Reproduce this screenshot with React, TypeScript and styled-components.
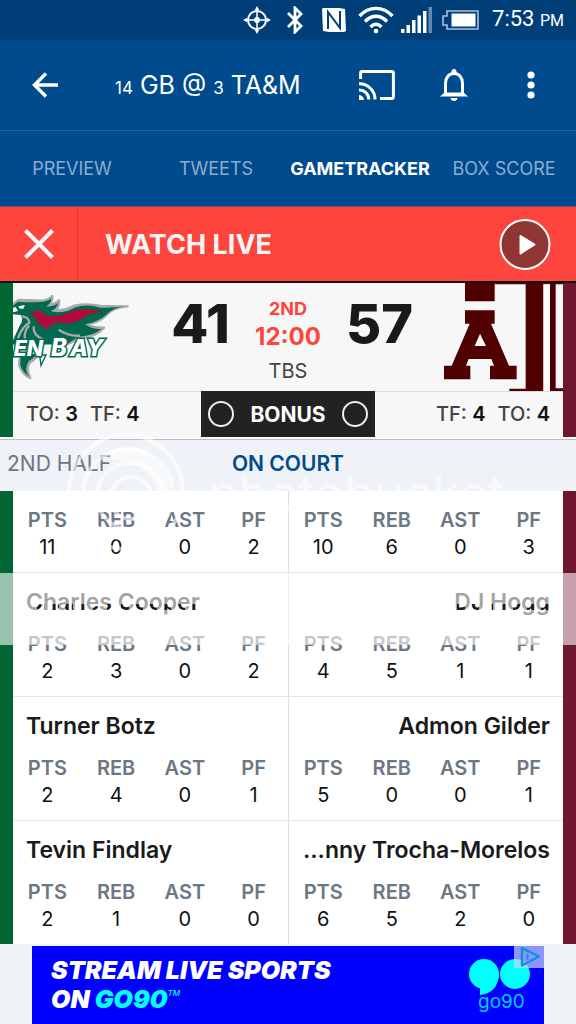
import React from "react";
import styled, { createGlobalStyle } from "styled-components";

const GlobalStyle = createGlobalStyle`
  *, *::before, *::after { box-sizing: border-box; }
  body { margin: 0; background: #eff3f7; }
  button { border: 0; padding: 0; background: none; font: inherit; color: inherit; cursor: pointer; }
  svg { display: block; flex: none; }
`;

const sans = `Inter, "Open Sans", "Liberation Sans", sans-serif`;
const green = "#006633";
const maroon = "#6f182d";

const Page = styled.div`
  font-family: ${sans};
  color: #1a1a1a;
  overflow-x: hidden;
`;

const StatusBar = styled.div`
  display: flex;
  align-items: center;
  justify-content: flex-end;
  height: 40px;
  padding-right: 12px;
  background: #003e78;
  color: #fff;
`;

const StatusIcon = styled.svg<{ $gap: number }>`
  margin-right: ${(p) => p.$gap}px;
`;

const StatusTime = styled.time`
  font: 400 22px/44px Roboto, sans-serif;
  small { font-size: 16px; }
`;

const AppBar = styled.header`
  display: flex;
  align-items: center;
  height: 90px;
  padding: 0 40px 0 32px;
  background: #004b8d;
  color: #fff;
`;

const Title = styled.h1`
  flex: 1;
  margin: 0 0 0 56px;
  padding-top: 3px;
  font-size: 25px;
  font-weight: 400;
  line-height: 32px;
  white-space: nowrap;
  small { font-size: 17px; }
`;

const BarButton = styled.button<{ $gap?: number }>`
  margin-left: ${(p) => p.$gap ?? 0}px;
`;

const Tabs = styled.nav`
  display: grid;
  grid-template-columns: repeat(4, 1fr);
  height: 77px;
  border-top: 1px solid #1f62a0;
  border-bottom: 1px solid #7a4a72;
  background: #004b8d;
`;

const Tab = styled.a<{ $active?: boolean }>`
  display: flex;
  align-items: center;
  justify-content: center;
  font-size: 18px;
  font-weight: ${(p) => (p.$active ? 700 : 400)};
  color: ${(p) => (p.$active ? "#fff" : "#8cadd0")};
  text-decoration: none;
  white-space: nowrap;
`;

const LiveBanner = styled.div`
  display: flex;
  align-items: stretch;
  height: 76px;
  border-bottom: 2px solid #111;
  background: #fd453d;
  color: #fff;
`;

const DismissButton = styled.button`
  display: flex;
  align-items: center;
  justify-content: center;
  width: 78px;
  border-right: 1px solid #d93c36;
`;

const LiveLabel = styled.div`
  flex: 1;
  padding-left: 27px;
  font-size: 27px;
  font-weight: 700;
  line-height: 76px;
  color: #f5f5f5;
`;

const PlayButton = styled.button`
  margin-right: 25px;
`;

const Railed = styled.section`
  border-left: 13px solid ${green};
  border-right: 13px solid ${maroon};
`;

const Scoreboard = styled(Railed)`
  background: #f7f7f7;
`;

const ScoreRow = styled.div`
  display: grid;
  grid-template-columns: 130px 1fr 68px 1fr 130px;
  height: 108px;
`;

const Score = styled.div`
  padding-left: 4px;
  font-size: 54px;
  font-weight: 800;
  line-height: 82px;
  text-align: center;
`;

const Clock = styled.div`
  display: flex;
  flex-direction: column;
  align-items: center;
  padding-top: 14px;
  white-space: nowrap;
`;

const Period = styled.div`
  font-size: 18px;
  font-weight: 700;
  line-height: 24px;
  color: #fd453d;
`;

const TimeLeft = styled(Period)`
  font-size: 24px;
  line-height: 32px;
`;

const Network = styled.div`
  margin-top: 4px;
  font-size: 20px;
  line-height: 28px;
  color: #444;
`;

const FoulRow = styled.div`
  display: grid;
  grid-template-columns: 1fr 174px 1fr;
  height: 46px;
`;

const Fouls = styled.div<{ $right?: boolean }>`
  display: flex;
  gap: 12px;
  justify-content: ${(p) => (p.$right ? "flex-end" : "flex-start")};
  padding: 0 13px;
  border-top: 1px solid #dcdcdc;
  font-size: 20px;
  font-weight: 500;
  line-height: 44px;
  color: #444;
  white-space: nowrap;
  b { font-weight: 600; color: #111; }
`;

const Bonus = styled.div`
  display: flex;
  align-items: center;
  justify-content: space-between;
  padding: 0 7px;
  background: #222;
  color: #fff;
  font-size: 21px;
  font-weight: 700;
`;

const BonusLight = styled.span`
  width: 26px;
  height: 26px;
  border: 2px solid #eee;
  border-radius: 50%;
`;

const Court = styled.div`
  position: relative;
`;

const CourtHeader = styled.div`
  display: grid;
  grid-template-columns: 1fr auto 1fr;
  height: 54px;
  padding: 0 7px;
  border-top: 2px solid #fafafa;
  background: #eff3f7;
  box-shadow: inset 0 1px 0 #bdbdbd;
  font-size: 21px;
  line-height: 50px;
  color: #6c7784;
  white-space: nowrap;
`;

const CourtTitle = styled.h2`
  margin: 0;
  font-size: 21px;
  font-weight: 600;
  color: #004b8d;
`;

const Players = styled(Railed)`
  background: #fff;
`;

const PlayerRow = styled.div`
  display: grid;
  grid-template-columns: 1fr 1fr;
  & + & { border-top: 1px solid #e6e6e6; }
`;

const Player = styled.article<{ $away?: boolean }>`
  min-width: 0;
  padding: 17px 0 10px;
  border-left: ${(p) => (p.$away ? "0" : "1px solid #dedede")};
`;

const PlayerName = styled.h3<{ $right: boolean }>`
  margin: 0 13px 18px;
  font-size: 23px;
  font-weight: 600;
  line-height: 24px;
  text-align: ${(p) => (p.$right ? "right" : "left")};
  white-space: nowrap;
`;

const StatTable = styled.table`
  width: 100%;
  table-layout: fixed;
  border-collapse: collapse;
  font-size: 20px;
  text-align: center;
  th { height: 24px; padding: 0; font-weight: 600; line-height: 24px; color: #6c7784; }
  td { height: 30px; padding: 0; line-height: 30px; color: #111; }
`;

const Watermark = styled.svg`
  position: absolute;
  top: -6px;
  left: 66px;
  pointer-events: none;
`;

const WatermarkBand = styled.svg`
  position: absolute;
  top: 136px;
  left: 0;
  width: 100%;
  height: 72px;
  pointer-events: none;
`;

const AdSlot = styled.aside`
  padding: 2px 32px 0;
  background: #eff3f7;
`;

const Ad = styled.a`
  display: flex;
  justify-content: space-between;
  height: 78px;
  padding: 10px 13px 0 19px;
  background: #0000fe;
  color: #fff;
  text-decoration: none;
`;

const AdFrame = styled.div`
  position: relative;
`;

const AdText = styled.div`
  font-size: 25px;
  font-weight: 900;
  font-style: italic;
  line-height: 29px;
  white-space: nowrap;
  em { color: #0ff; }
  sup { font-size: 8px; font-weight: 500; line-height: 8px; vertical-align: 12px; color: #0ff; }
`;

const AdChoices = styled.button`
  position: absolute;
  top: 0;
  right: 0;
`;

type Line = { name?: string; stats: number[] };
const rows: [Line, Line][] = [
  [{ stats: [11, 0, 0, 2] }, { stats: [10, 6, 0, 3] }],
  [{ name: "Charles Cooper", stats: [2, 3, 0, 2] }, { name: "DJ Hogg", stats: [4, 5, 1, 1] }],
  [{ name: "Turner Botz", stats: [2, 4, 0, 1] }, { name: "Admon Gilder", stats: [5, 0, 0, 1] }],
  [{ name: "Tevin Findlay", stats: [2, 1, 0, 0] }, { name: "...nny Trocha-Morelos", stats: [6, 5, 2, 0] }],
];

function PlayerCard({ line, away }: { line: Line; away: boolean }) {
  return (
    <Player $away={away}>
      {line.name && <PlayerName $right={!away}>{line.name}</PlayerName>}
      <StatTable>
        <thead>
          <tr>{["PTS", "REB", "AST", "PF"].map((s) => <th key={s} scope="col">{s}</th>)}</tr>
        </thead>
        <tbody>
          <tr>{line.stats.map((v, i) => <td key={i}>{v}</td>)}</tr>
        </tbody>
      </StatTable>
    </Player>
  );
}

function StatusIcons() {
  return (
    <>
      <StatusIcon $gap={15} width="28" height="28" viewBox="0 0 28 28" fill="none" stroke="#fff" strokeWidth="1.5">
        <circle cx="14" cy="14" r="9" strokeWidth="2" />
        <path d="M14 3v22M3 14h22" />
        <circle cx="14" cy="14" r="3" fill="#fff" stroke="none" />
        <path d="M14 0l2.200 4h-4.400zM14 28l2.200-4h-4.400zM0 14l4-2.200v4.400zM28 14l-4-2.200v4.400z" fill="#fff" stroke="none" />
      </StatusIcon>
      <StatusIcon $gap={18} width="18" height="28" viewBox="0 0 18 28" fill="none" stroke="#fff" strokeWidth="2.800">
        <path d="M2 7l13 13-6 6V2l6 6L2 21" />
      </StatusIcon>
      <StatusIcon $gap={12} width="24" height="24" viewBox="0 0 24 24">
        <path d="M1 0H17L23 1L24 23L22 24H7L1 23L0 1Z" fill="#fff" />
        <path d="M6 21V4L18 20V3" fill="none" stroke="#003e78" strokeWidth="2" />
      </StatusIcon>
      <StatusIcon $gap={7} width="36" height="28" viewBox="0 0 36 28" fill="none" stroke="#fff" strokeWidth="3.400">
        <path d="M1.500 10C11-.2 25-.2 34.500 10M7 15.500c6.500-7 15.500-7 22 0M12.500 21c3.500-3.400 7.500-3.400 11 0" />
        <circle cx="18" cy="25" r="2.300" fill="#fff" stroke="none" />
      </StatusIcon>
      <StatusIcon $gap={10} width="31" height="26" viewBox="0 0 31 26" fill="#fff">
        <path d="M0 22h3.500v4H0zM5.500 18H9v8H5.500zM11 13h3.500v13H11zM16.500 8.500H20V26h-3.500zM22 4h3.500v22H22z" />
        <path d="M27.500 0H31v26h-3.500z" opacity=".4" />
      </StatusIcon>
      <StatusIcon $gap={13} width="37" height="20" viewBox="0 0 37 20">
        <path d="M5 1H36V19H5V15H1V6H5Z" fill="none" stroke="#a9c1da" strokeWidth="1.600" />
        <path d="M9.500 3.500H33.500V16.500H9.500Z" fill="#fff" />
      </StatusIcon>
    </>
  );
}

/* Phoenix head and wings with the wordmark across them. */
function PhoenixLogo() {
  return (
    <svg width="130" height="108" viewBox="39 24 390 324" role="img" aria-label="Green Bay Phoenix">
      <g stroke="#a7a9ac" strokeWidth="7" strokeLinejoin="round" fill="#a7a9ac">
        <path d="M39 88L55 75Q90 76 128 77Q148 74 157 63Q157 84 145 91Q166 88 177 76Q180 98 162 107Q192 108 224 92Q260 84 302 93Q350 95 383 94Q342 96 322 118Q298 145 262 146Q280 160 312 158Q290 184 240 190L205 206H39Z" />
        <path d="M66 240H112Q104 256 90 262Q76 280 91 309Q65 296 58 272Q55 256 66 240Z" />
      </g>
      <path d="M39 92L54 80Q92 83 128 80Q147 79 154 70Q153 88 137 95Q164 94 174 83Q173 100 152 108Q190 119 226 97Q260 86 302 98Q345 99 372 94Q338 99 318 120Q294 141 255 148Q276 164 304 162Q284 181 236 185L200 208H39Z" fill="#00694e" />
      <path d="M64 238H110Q101 251 86 259Q71 282 87 304Q66 290 61 270Q60 252 64 238Z" fill="#00694e" />
      <path d="M88 113Q108 112 122 105Q124 118 150 124Q189 125 224 105Q263 98 314 111Q279 112 261 121Q238 142 202 146Q172 139 156 149L137 166Q134 151 116 148Q115 132 88 113Z" fill="#b3093c" />
      <path d="M39 98L47 96L54 108L39 112ZM55 94L75 90L69 102L58 100Z" fill="#fff" />
      <path d="M39 118L62 120Q72 136 60 150L39 196Z" fill="#f7f7f7" />
      <path d="M62 124Q86 124 88 143Q66 155 54 190M88 152Q72 165 74 195M101 154Q98 180 130 194M176 164Q206 184 240 182" fill="none" stroke="#a7a9ac" strokeWidth="7" />
      <path d="M119 240L138 240L123 271Z" fill="#fff" stroke="#00694e" strokeWidth="4" />
      <g fontFamily={sans} fontWeight="800" fontStyle="italic" fill="#fff" stroke="#00694e" strokeWidth="9" paintOrder="stroke">
        <text x="41" y="243" fontSize="64">EN</text>
        <text x="153" y="243" fontSize="72">B</text>
        <text x="210" y="243" fontSize="70">AY</text>
      </g>
    </svg>
  );
}

/* Block A beside the stem of the T, cropped by the panel's edge. */
function AggieLogo() {
  return (
    <svg width="130" height="108" viewBox="69 24 390 324" role="img" aria-label="Texas A&M">
      <path d="M165 24H254V79H165ZM165 106H254V146H243L297 272H320V313H240V272H252L244 252H176L168 272H181V313H102V272H125L179 146H165Z" fill="#500000" />
      <path d="M210 176L228 213H194Z" fill="#f7f7f7" />
      <path d="M254 24H459V28H437V340H459V348H420V28H400V348H298V341H347V28H254Z" fill="#500000" />
      <path d="M401 28H419V348H401Z" fill="#fff" />
    </svg>
  );
}

export default function App() {
  return (
    <Page>
      <GlobalStyle />
      <StatusBar>
        <StatusIcons />
        <StatusTime>7:53 <small>PM</small></StatusTime>
      </StatusBar>

      <AppBar>
        <BarButton aria-label="Back">
          <svg width="27" height="26" viewBox="0 0 27 26" fill="none" stroke="#fff" strokeWidth="3.400">
            <path d="M14 1.500L2.500 13 14 24.500M2.500 13H26" />
          </svg>
        </BarButton>
        <Title><small>14</small> GB @ <small>3</small> TA&amp;M</Title>
        <BarButton aria-label="Cast">
          <svg width="36" height="30" viewBox="0 0 36 30" fill="none" stroke="#fff" strokeWidth="3">
            <path d="M1.600 9V3.200Q1.600 1.600 3.200 1.600H32.800Q34.400 1.600 34.400 3.200V26.800Q34.400 28.400 32.800 28.400H21" />
            <path d="M0 13.800A15.500 15.500 0 0 1 16 29.500M0 20A9.500 9.500 0 0 1 9.800 29.500" />
            <path d="M0 25Q4.500 25.500 5 30H0Z" fill="#fff" stroke="none" />
          </svg>
        </BarButton>
        <BarButton $gap={45} aria-label="Alerts">
          <svg width="28" height="32" viewBox="0 0 28 32">
            <path d="M5.500 26V14.500C5.500 8.500 9 4.500 14 4.500S22.500 8.500 22.500 14.500V26" fill="none" stroke="#fff" strokeWidth="3" />
            <path d="M11.500 4V2.500A2.500 2.500 0 0 1 16.500 2.500V4ZM0 27.500L4.500 23.500H23.500L28 27.500ZM10.500 29H17.500Q17 32 14 32T10.500 29Z" fill="#fff" />
          </svg>
        </BarButton>
        <BarButton $gap={58} aria-label="More options">
          <svg width="10" height="28" viewBox="0 0 10 28" fill="#fff">
            <circle cx="5" cy="4" r="3.600" />
            <circle cx="5" cy="14" r="3.600" />
            <circle cx="5" cy="24" r="3.600" />
          </svg>
        </BarButton>
      </AppBar>

      <Tabs>
        <Tab href="#preview">PREVIEW</Tab>
        <Tab href="#tweets">TWEETS</Tab>
        <Tab href="#gametracker" $active aria-current="page">GAMETRACKER</Tab>
        <Tab href="#boxscore">BOX SCORE</Tab>
      </Tabs>

      <LiveBanner>
        <DismissButton aria-label="Dismiss">
          <svg width="30" height="30" viewBox="0 0 30 30" stroke="#fff" strokeWidth="4">
            <path d="M1.500 1.500L28.500 28.500M28.500 1.500L1.500 28.500" />
          </svg>
        </DismissButton>
        <LiveLabel>WATCH LIVE</LiveLabel>
        <PlayButton aria-label="Play">
          <svg width="52" height="52" viewBox="0 0 52 52">
            <circle cx="26" cy="26.500" r="24.500" fill="#8f3533" stroke="#fff" strokeWidth="2" />
            <path d="M21.500 18L35.500 26.500 21.500 35.500Z" fill="#fff" stroke="#fff" strokeWidth="2" strokeLinejoin="round" />
          </svg>
        </PlayButton>
      </LiveBanner>

      <Scoreboard>
        <ScoreRow>
          <PhoenixLogo />
          <Score>41</Score>
          <Clock>
            <Period>2ND</Period>
            <TimeLeft>12:00</TimeLeft>
            <Network>TBS</Network>
          </Clock>
          <Score>57</Score>
          <AggieLogo />
        </ScoreRow>
        <FoulRow>
          <Fouls><span>TO: <b>3</b></span><span>TF: <b>4</b></span></Fouls>
          <Bonus><BonusLight />BONUS<BonusLight /></Bonus>
          <Fouls $right><span>TF: <b>4</b></span><span>TO: <b>4</b></span></Fouls>
        </FoulRow>
      </Scoreboard>

      <Court>
        <CourtHeader>
          <span>2ND HALF</span>
          <CourtTitle>ON COURT</CourtTitle>
        </CourtHeader>
        <Players>
          {rows.map(([a, b], i) => (
            <PlayerRow key={i}>
              <PlayerCard line={a} away />
              <PlayerCard line={b} away={false} />
            </PlayerRow>
          ))}
        </Players>
        <Watermark width="440" height="130" viewBox="0 0 440 130" aria-hidden="true">
          <g fill="none" stroke="#fff" strokeWidth="4" opacity=".6">
            <circle cx="60" cy="61" r="57" />
            <circle cx="62" cy="63" r="45" />
            <circle cx="64" cy="65" r="33" />
            <circle cx="65" cy="67" r="21" />
          </g>
          <path d="M45 19Q95 5 104 60H92Q82 30 45 28Z" fill="#fff" opacity=".5" />
          <text x="142" y="80" fontFamily={sans} fontSize="50" fontWeight="400" fill="#fff" opacity=".5">photobucket</text>
        </Watermark>
        <WatermarkBand aria-hidden="true">
          <mask id="band">
            <rect width="100%" height="72" fill="#fff" />
            <line x1="37" y1="34" x2="96%" y2="34" stroke="#000" strokeWidth="6" strokeDasharray="8 6" />
          </mask>
          <rect width="100%" height="72" fill="#fff" opacity=".6" mask="url(#band)" />
        </WatermarkBand>
      </Court>

      <AdSlot>
        <AdFrame>
          <Ad href="#go90">
            <AdText>
              STREAM LIVE SPORTS<br />ON <em>GO90</em><sup>TM</sup>
            </AdText>
            <svg width="64" height="60" viewBox="0 0 64 60" role="img" aria-label="go90">
              <g fill="#0ff">
                <circle cx="17" cy="18" r="15" />
                <circle cx="48" cy="18" r="15" />
                <path d="M32 18Q31 37 13 39V31Z" />
              </g>
              <text x="11" y="52" fontFamily={sans} fontSize="19" fill="#0cf">go90</text>
            </svg>
          </Ad>
          <AdChoices aria-label="Ad choices">
            <svg width="30" height="22" viewBox="0 0 30 22">
              <path d="M0 0H30V22H0Z" fill="#c8d4ff" opacity=".7" />
              <path d="M8 2L25 10.500 8 19.500Z" fill="none" stroke="#1590d8" strokeWidth="2.500" strokeLinejoin="round" />
              <path d="M13.500 8V14M13.500 5V6.500" stroke="#1590d8" strokeWidth="2" />
            </svg>
          </AdChoices>
        </AdFrame>
      </AdSlot>
    </Page>
  );
}
